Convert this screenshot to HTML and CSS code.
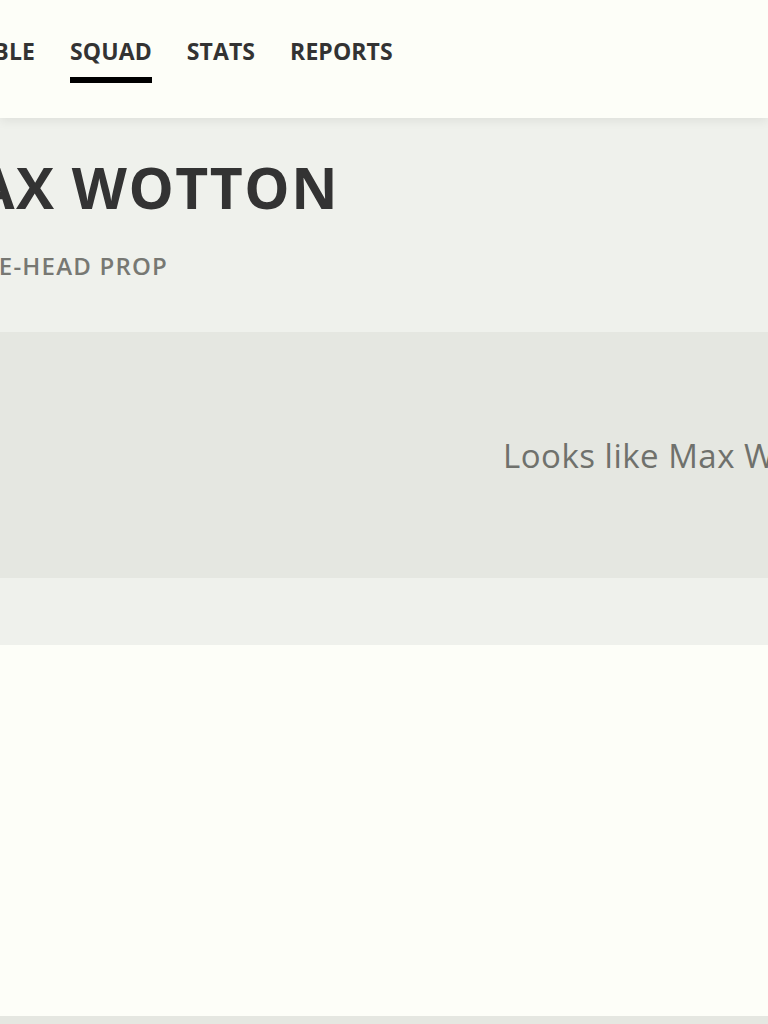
FILE: index.html
```html
<!DOCTYPE html>
<html lang="en">
<head>
<meta charset="utf-8">
<title>Max Wotton – Squad</title>
<link rel="stylesheet" href="styles.css">
</head>
<body>
<div class="viewport">
  <header class="topbar">
    <nav class="tabs">
      <div class="tabs-prev">
        <a class="tab" href="#">FIXTURES</a>
        <a class="tab" href="#">TABLE</a>
      </div>
      <a class="tab active" href="#">SQUAD</a>
      <a class="tab" href="#">STATS</a>
      <a class="tab" href="#">REPORTS</a>
    </nav>
  </header>
  <section class="profile">
    <div class="profile-head">
      <div class="name-row"><h1 class="name">MAX WOTTON</h1></div>
      <div class="position-row"><p class="position">LOOSE-HEAD PROP</p></div>
    </div>
    <div class="empty-band">
      <p class="empty-text">Looks like Max Wotton hasn't played any games yet.</p>
    </div>
  </section>
  <main class="content"></main>
  <footer class="footer"></footer>
</div>
</body>
</html>
```

FILE: styles.css
```css
* { box-sizing: border-box; }
html, body { margin: 0; padding: 0; }
body {
  background: #fdfef8;
  font-family: "Open Sans", "Liberation Sans", sans-serif;
  color: #333333;
}
.viewport {
  width: 768px;
  height: 1024px;
  overflow: hidden;
  display: flex;
  flex-direction: column;
}
.topbar {
  height: 118px;
  flex: none;
  background: #fdfef8;
  box-shadow: 0 3px 10px rgba(0, 0, 0, 0.07);
  position: relative;
  z-index: 1;
}
.tabs {
  display: flex;
  gap: 35px;
  white-space: nowrap;
  padding-top: 38px;
}
.tabs-prev {
  flex: none;
  width: 35px;
  display: flex;
  justify-content: flex-end;
  gap: 35px;
}
.tab {
  display: block;
  flex: none;
  font-size: 23px;
  font-weight: 700;
  line-height: 26px;
  letter-spacing: 0.1px;
  color: #333333;
  text-decoration: none;
  padding-bottom: 13px;
  border-bottom: 6px solid transparent;
}
.tab.active { border-bottom-color: #000000; }
.profile {
  flex: none;
  background: #eff1ec;
  padding-bottom: 67px;
}
.profile-head {
  padding: 41px 0 55px;
  white-space: nowrap;
}
.name-row,
.position-row {
  display: flex;
  justify-content: flex-end;
}
.name-row { width: 339px; }
.position-row { width: 168px; margin-top: 38px; }
.name {
  flex: none;
  margin: 0;
  font-size: 57px;
  font-weight: 700;
  line-height: 57px;
  letter-spacing: 1.5px;
  color: #333333;
}
.position {
  flex: none;
  margin: 0;
  font-size: 24px;
  font-weight: 600;
  line-height: 23px;
  letter-spacing: 1.2px;
  color: #777873;
}
.empty-band {
  height: 246px;
  background: #e5e7e1;
  display: flex;
  align-items: center;
  padding-left: 503px;
  white-space: nowrap;
}
.empty-text {
  margin: 0;
  font-size: 33px;
  line-height: 33px;
  font-weight: 500;
  letter-spacing: 0.5px;
  color: #6f716c;
}
.content { flex: 1; background: #fdfef8; }
.footer { height: 8px; flex: none; background: #e5e7e1; }
```
